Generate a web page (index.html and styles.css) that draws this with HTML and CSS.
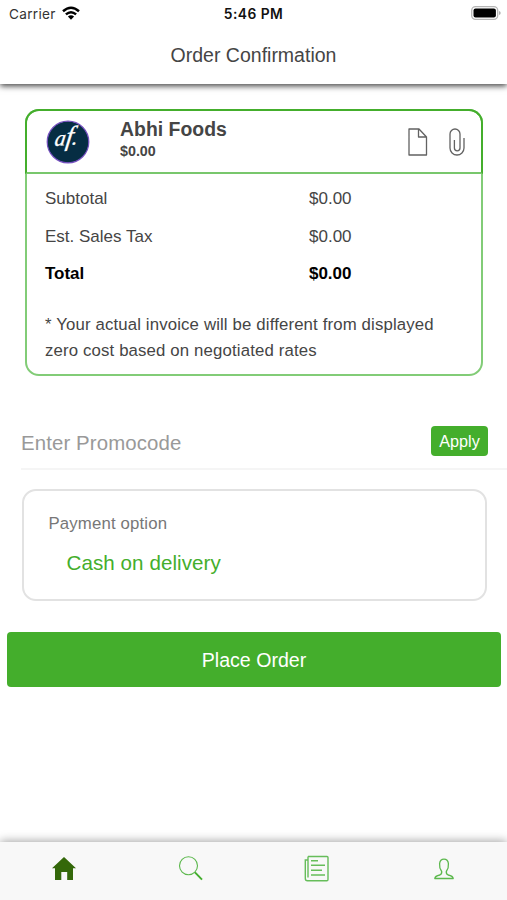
FILE: index.html
```html
<!DOCTYPE html>
<html lang="en">
<head>
<meta charset="utf-8">
<meta name="viewport" content="width=device-width, initial-scale=1">
<title>Order Confirmation</title>
<link rel="stylesheet" href="styles.css">
</head>
<body>
<div class="screen">
  <header class="topbar">
    <div class="status">
      <div class="carrier"><span>Carrier</span>
        <svg class="wifi" viewBox="0 0 18 14"><g fill="none" stroke="#000" stroke-width="2.5"><path d="M1 5.2Q9-1.7 17 5.2"/><path d="M3.9 8.4Q9 4 14.1 8.4"/></g><path d="M5.9 10.6Q9 8 12.1 10.6L9 13.8z"/></svg>
      </div>
      <time class="clock">5:46 PM</time>
      <svg class="battery" viewBox="0 0 30 14"><rect x=".7" y=".7" width="26" height="12.6" rx="3.8" fill="#fff" stroke="#b5b5b5" stroke-width="1.3"/><rect x="2.5" y="2.5" width="22.4" height="9" rx="2" fill="#000"/><path d="M28.1 5q1.5.6 1.5 2t-1.5 2z" fill="#a5a5a5"/></svg>
    </div>
    <h1 class="title">Order Confirmation</h1>
  </header>
  <main class="content">
    <section class="order">
      <div class="vendor">
        <svg class="logo" viewBox="0 0 44 44"><circle cx="22" cy="22" r="20.8" fill="#062d43" stroke="#7650c0" stroke-width="1.2"/><text class="mark" transform="translate(8 26) rotate(-4) skewX(-12)">a<tspan class="tall">f</tspan><tspan dx="-1">.</tspan></text></svg>
        <div class="vendor-text"><h2 class="name">Abhi Foods</h2><p class="amount">$0.00</p></div>
        <svg class="file" viewBox="0 0 20 28"><path d="M1 1H11L18.500 9V27H1zM10.500 1V9H18.500" fill="none" stroke="#626262" stroke-width="1.3" stroke-linejoin="round"/></svg>
        <svg class="clip" viewBox="0 0 16 28"><path d="M11 16V6a5 5 0 0 0-10 0V20a7 7 0 0 0 14 0V10M11 8V20a2.800 2.800 0 0 1-5.600 0V12" fill="none" stroke="#626262" stroke-width="1.3"/></svg>
      </div>
      <dl class="sums">
        <dt>Subtotal</dt><dd>$0.00</dd>
        <dt>Est. Sales Tax</dt><dd>$0.00</dd>
        <dt class="total">Total</dt><dd class="total">$0.00</dd>
      </dl>
      <p class="note">* Your actual invoice will be different from displayed<br>zero cost based on negotiated rates</p>
    </section>
    <div class="promo"><span class="placeholder">Enter Promocode</span><button class="apply">Apply</button></div>
    <section class="payment"><p class="label">Payment option</p><p class="method">Cash on delivery</p></section>
    <button class="place">Place Order</button>
  </main>
  <nav class="tabs">
    <svg class="tab" viewBox="0 0 28 28"><path d="M14 2 26 13.3H23V25H17.2V17H11.3V25H5V13.3H2z" fill="#34680a"/></svg>
    <svg class="tab" viewBox="0 0 28 28"><circle cx="11.5" cy="10.8" r="9" fill="none" stroke="#5cb84d" stroke-width="1.1"/><path d="M18 17.3 25 24.6" stroke="#43ae2d" stroke-width="1.9"/></svg>
    <svg class="tab" viewBox="0 0 28 28"><path d="M5 1.5H24Q25 1.5 25 2.5V24.5Q25 25.7 23.8 25.7H4.500Q2.300 25.700 2.300 23.500V5H5M5 1.500V22.500M8 5.700H15M8 10.300H22M8 15.300H19M8 20H22" fill="none" stroke="#66bd5a" stroke-width="1.4"/></svg>
    <svg class="tab" viewBox="0 0 28 28"><path d="M11.700 16.500C8.500 12 8.500 4.200 14 4.200S19.500 12 16.300 16.500Q16 19 18.200 20Q23 21.100 23.200 23.500H4.800Q5 21.100 9.800 20Q12 19 11.700 16.500z" fill="none" stroke="#5cb84d" stroke-width="1.300" stroke-linejoin="round"/></svg>
  </nav>
</div>
</body>
</html>
```
FILE: styles.css
```css
* { box-sizing: border-box; }
body, h1, h2, p, dl, dd { margin: 0; }
body {
  background: #fff;
  color: #454545;
  font-family: "Liberation Sans", Arial, sans-serif;
  overflow: hidden;
}
svg { display: block; flex: none; }
button { border: 0; padding: 0; color: #fff; background: #44ae2c; font-family: inherit; }
.screen { height: 900px; display: flex; flex-direction: column; }
.topbar { height: 84px; flex: none; background: #fff; box-shadow: 0 2px 6px rgba(0, 0, 0, .75); clip-path: inset(0 0 -16px 0); }
.status { height: 28px; padding: 0 6px 0 9px; display: grid; grid-template-columns: 1fr auto 1fr; align-items: center; font-family: Inter, sans-serif; }
.carrier { display: flex; align-items: center; gap: 6px; font-size: 13.6px; letter-spacing: .3px; color: #333; }
.wifi { width: 18px; height: 14px; margin-top: -2px; }
.clock { margin-left: -3px; font-size: 13.8px; font-weight: 600; letter-spacing: .45px; color: #111; }
.battery { width: 30px; height: 14px; justify-self: end; margin: -2px 0 0 0; }
.title { height: 54px; line-height: 54px; text-align: center; font-size: 19.5px; font-weight: 400; }
.content { flex: 1; padding-top: 25px; }
.order { width: 458px; height: 267px; margin-left: 25px; border: 2px solid #82cc77; border-radius: 14px; }
.vendor { height: 65px; width: 458px; margin: -2px 0 0 -2px; padding: 0 16px 0 20px; display: flex; align-items: center; border: 2px solid #44ae2c; border-bottom-color: #78c76c; border-radius: 14px 14px 0 0; }
.logo { width: 44px; height: 44px; margin-left: -1px; }
.mark { fill: #fff; stroke: #fff; stroke-width: .3; font-family: "Liberation Serif", cursive; font-style: italic; font-size: 22px; }
.tall { font-size: 27px; }
.vendor-text { width: 288px; margin-left: 30px; margin-top: -4px; }
.name { font-size: 19.4px; line-height: 23px; font-weight: 700; letter-spacing: .03px; }
.amount { font-size: 14.3px; line-height: 21px; font-weight: 700; }
.file { width: 20px; height: 28px; margin-top: 1px; }
.clip { width: 16px; height: 28px; margin: 1px 0 0 21px; }
.sums { display: grid; grid-template-columns: 264px 1fr; grid-auto-rows: 37.7px; padding-left: 18px; padding-top: 6px; line-height: 37px; font-size: 17px; }
.total { color: #000; font-weight: 700; letter-spacing: -.05px; }
.note { padding: 19px 0 0 18px; font-size: 16.8px; letter-spacing: .14px; line-height: 26px; white-space: nowrap; }
.promo { height: 57px; margin: 37px 0 0 21px; padding-right: 19px; display: flex; align-items: center; justify-content: space-between; border-bottom: 2px solid #f5f5f5; }
.placeholder { padding-top: 5px; color: #999; font-size: 20.4px; letter-spacing: .12px; }
.apply { width: 57px; height: 30px; margin-top: 1px; padding-top: 1px; border-radius: 4px; font-size: 16.2px; }
.payment { width: 465px; height: 112px; margin: 19px 0 0 21.5px; padding: 21px 25px; border: 2px solid #e2e2e2; border-radius: 14px; }
.label { color: #777; font-size: 16.8px; letter-spacing: .15px; line-height: 24px; }
.method { padding-left: 18px; margin-top: 14px; color: #44ae2c; font-size: 20.6px; letter-spacing: .06px; line-height: 26px; }
.place { display: block; width: 494px; height: 55px; margin: 31px 0 0 7px; padding-top: 2px; border-radius: 4px; font-size: 19.6px; }
.tabs { height: 58px; flex: none; display: grid; grid-template-columns: repeat(4, 1fr); justify-items: center; padding-top: 13px; background: #f8f8f8; box-shadow: 0 -1px 9px rgba(0, 0, 0, .36); clip-path: inset(-16px 0 0 0); }
.tab { width: 28px; height: 28px; margin-left: 1px; }
```
